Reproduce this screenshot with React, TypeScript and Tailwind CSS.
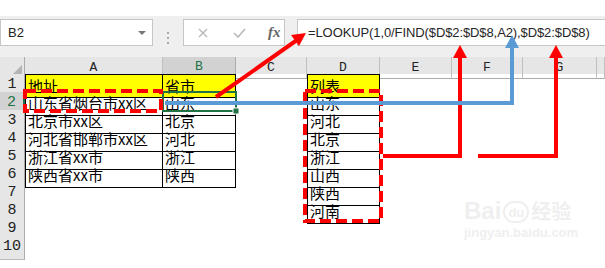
import React from "react";

const gridCols = "grid grid-cols-[25px_138px_73px_71px_73px_72px_71px_74px_1fr]";
const cjk = "font-['Noto_Sans_CJK_SC',sans-serif]";
const mono = "font-['Liberation_Mono',monospace]";

type Row = { n: number; a?: string; b?: string; d?: string };

const rows: Row[] = [
  { n: 1, a: "地址", b: "省市", d: "列表" },
  { n: 2, a: "山东省烟台市xx区", b: "山东", d: "山东" },
  { n: 3, a: "北京市xx区", b: "北京", d: "河北" },
  { n: 4, a: "河北省邯郸市xx区", b: "河北", d: "北京" },
  { n: 5, a: "浙江省xx市", b: "浙江", d: "浙江" },
  { n: 6, a: "陕西省xx市", b: "陕西", d: "山西" },
  { n: 7, d: "陕西" },
  { n: 8, d: "河南" },
  { n: 9 },
  { n: 10 },
];

const letters = ["A", "B", "C", "D", "E", "F", "G", ""];

function Toolbar() {
  return (
    <div className="flex h-[41px] bg-[#efefef] pt-[3px]">
      <div className="flex h-[27px] w-[153px] items-center justify-between border border-[#c6c6c6] bg-white pl-[7px] pr-[6px]">
        <span className="font-['Liberation_Sans',sans-serif] text-[13px] text-[#222]">B2</span>
        <svg width="8" height="4" viewBox="0 0 8 4">
          <path d="M0 0 H8 L4 4 Z" fill="#777" />
        </svg>
      </div>
      <div className="flex w-[30px] flex-col items-center justify-center gap-[3px] pb-[1px]">
        <div className="h-[2px] w-[2px] bg-[#a8a8a8]" />
        <div className="h-[2px] w-[2px] bg-[#a8a8a8]" />
        <div className="h-[2px] w-[2px] bg-[#a8a8a8]" />
      </div>
      <div className="flex h-[27px] w-[102px] items-center border border-[#c6c6c6] bg-white pl-[14px]">
        <svg width="10" height="10" viewBox="0 0 10 10">
          <path d="M1 1 L9 9 M9 1 L1 9" stroke="#b8b8b8" strokeWidth="1.4" />
        </svg>
        <svg className="ml-[25px]" width="13" height="10" viewBox="0 0 13 10">
          <path d="M1 5 L5 9 L12 1" stroke="#b8b8b8" strokeWidth="1.6" fill="none" />
        </svg>
        <span className="ml-[22px] font-['Liberation_Serif',serif] text-[15px] font-bold italic leading-none text-[#666]">
          fx
        </span>
      </div>
      <div className="w-[12px]" />
      <div className="flex h-[27px] flex-1 items-center border border-r-0 border-[#c6c6c6] bg-white pl-[10px]">
        <span className="font-['Liberation_Sans',sans-serif] text-[13px] tracking-[-0.1px] text-[#262626]">
          =LOOKUP(1,0/FIND($D$2:$D$8,A2),$D$2:$D$8)
        </span>
      </div>
    </div>
  );
}

function HeaderRow() {
  return (
    <div className={`${gridCols} h-[17px] bg-[#e6e6e6]`}>
      <div className="flex items-end justify-end border-r border-b border-[#ababab] pr-[2px] pb-[2px]">
        <svg width="11" height="11" viewBox="0 0 11 11">
          <path d="M11 0 V11 H0 Z" fill="#b4b4b4" />
        </svg>
      </div>
      {letters.map((l, i) =>
        l === "B" ? (
          <div
            key={i}
            className={`flex items-center justify-center border-r border-b-2 border-r-[#ababab] border-b-[#217346] bg-[#d2d2d2] text-[13px] text-[#217346] ${mono}`}
          >
            {l}
          </div>
        ) : (
          <div
            key={i}
            className={`flex items-center justify-center border-r border-b border-[#c0c0c0] border-b-[#ababab] text-[13px] text-[#222] ${mono}`}
          >
            {l}
          </div>
        )
      )}
    </div>
  );
}

function Cell({ text, yellow, bordered, first, left }: { text?: string; yellow?: boolean; bordered: boolean; first: boolean; left?: boolean }) {
  const border = bordered
    ? `border-black border-r border-b ${left ? "border-l" : ""} ${first ? "border-t" : ""}`
    : "";
  return (
    <div
      className={`flex items-center whitespace-nowrap pl-[2px] text-[15px] leading-[16px] text-black ${cjk} ${border} ${
        yellow ? "bg-[#ffff00]" : ""
      }`}
    >
      {text}
    </div>
  );
}

function SheetRow({ r }: { r: Row }) {
  const sel = r.n === 2;
  const first = r.n === 1;
  return (
    <div className={`${gridCols} h-[18px]`}>
      <div
        className={`flex items-center justify-center border-b border-[#bdbdbd] text-[15px] ${mono} ${
          sel ? "border-r-2 border-r-[#217346] bg-[#d2d2d2] text-[#217346]" : "border-r border-r-[#ababab] bg-[#e6e6e6] text-[#222]"
        }`}
      >
        {r.n}
      </div>
      <Cell text={r.a} yellow={first} bordered={r.n <= 6} first={first} left />
      <Cell text={r.b} yellow={first} bordered={r.n <= 6} first={first} />
      <div />
      <Cell text={r.d} yellow={first} bordered={r.n <= 8} first={first} left />
      <div />
      <div />
      <div />
      <div />
    </div>
  );
}

function Overlay() {
  return (
    <svg className="pointer-events-none absolute left-0 top-0" width="605" height="268" viewBox="0 0 605 268">
      {/* selection */}
      <rect x="163" y="92" width="73" height="19" fill="none" stroke="#217346" strokeWidth="2" />
      <rect x="233" y="108" width="6" height="6" fill="#217346" stroke="#fff" strokeWidth="1" />
      {/* dashed boxes */}
      <rect x="25" y="91" width="136" height="20" fill="none" stroke="#ff0000" strokeWidth="4" strokeDasharray="11 5" />
      <rect x="305" y="91" width="76" height="130" fill="none" stroke="#ff0000" strokeWidth="4" strokeDasharray="11 5" />
      {/* diagonal arrow */}
      <line x1="216" y1="97" x2="297" y2="40" stroke="#ff0000" strokeWidth="4" />
      <polygon points="306,33 299,46 291,35" fill="#ff0000" />
      {/* red arrows */}
      <path d="M383 156 H460 V56" fill="none" stroke="#ff0000" strokeWidth="4" />
      <polygon points="460,45 467,58 453,58" fill="#ff0000" />
      <path d="M478 156 H556 V56" fill="none" stroke="#ff0000" strokeWidth="4" />
      <polygon points="556,45 563,58 549,58" fill="#ff0000" />
      {/* blue arrow */}
      <path d="M165 103 H512 V46" fill="none" stroke="#5b9bd5" strokeWidth="4" />
      <polygon points="512,35 519,48 505,48" fill="#5b9bd5" />
    </svg>
  );
}

function Watermark() {
  return (
    <div className="pointer-events-none absolute left-[464px] top-[199px] flex flex-col text-[#efefef]">
      <div className="flex items-end font-['Liberation_Sans',sans-serif] font-bold">
        <span className="text-[24px] leading-[24px]">Bai</span>
        <span className="mx-[2px] flex h-[22px] w-[26px] items-center justify-center rounded-full border-2 border-[#efefef] text-[13px] leading-none">
          du
        </span>
        <span className={`text-[20px] leading-[24px] ${cjk}`}>经验</span>
      </div>
      <span className="mt-[3px] font-['Liberation_Sans',sans-serif] text-[13px] font-bold leading-[14px]">
        jingyan.baidu.com
      </span>
    </div>
  );
}

export default function App() {
  return (
    <div className="relative h-[268px] w-[605px] overflow-hidden bg-white">
      <div className="h-[16px] bg-white" />
      <Toolbar />
      <HeaderRow />
      {rows.map((r) => (
        <SheetRow key={r.n} r={r} />
      ))}
      <div className={`${gridCols} h-[4px]`}>
        <div className="border-r border-[#ababab] bg-[#e6e6e6]" />
      </div>
      <Watermark />
      <Overlay />
    </div>
  );
}
